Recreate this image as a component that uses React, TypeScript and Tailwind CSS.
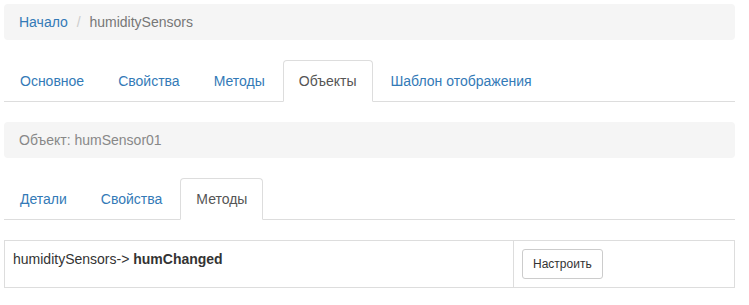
const font = { fontFamily: '"Liberation Sans", Arial, sans-serif' }

type Tab = { label: string; active?: boolean }

function Tabs({ items }: { items: Tab[] }) {
  return (
    <ul className="flex border-b border-[#ddd] mb-5">
      {items.map((t) => (
        <li key={t.label} className="-mb-px mr-[2px]">
          {t.active ? (
            <span className="block px-[15px] py-[10px] leading-5 border border-[#ddd] border-b-white rounded-t bg-white text-[#555]">
              {t.label}
            </span>
          ) : (
            <a
              href="#"
              className="block px-[15px] py-[10px] leading-5 border border-transparent rounded-t text-[#337ab7]"
            >
              {t.label}
            </a>
          )}
        </li>
      ))}
    </ul>
  )
}

export default function App() {
  return (
    <div className="bg-white min-h-[305px] pt-1 pl-1 text-sm text-[#333]" style={font}>
      <div className="w-[731px]">
        <div className="bg-[#f5f5f5] rounded px-[15px] py-2 leading-5 mb-5">
          <a href="#" className="text-[#337ab7]">
            Начало
          </a>
          <span className="text-[#ccc] px-[5px]"> / </span>
          <span className="text-[#777]">humiditySensors</span>
        </div>

        <Tabs
          items={[
            { label: 'Основное' },
            { label: 'Свойства' },
            { label: 'Методы' },
            { label: 'Объекты', active: true },
            { label: 'Шаблон отображения' },
          ]}
        />

        <div className="bg-[#f5f5f5] rounded px-[15px] py-2 leading-5 mb-5 text-[#888]">
          Объект: humSensor01
        </div>

        <Tabs
          items={[
            { label: 'Детали' },
            { label: 'Свойства' },
            { label: 'Методы', active: true },
          ]}
        />

        <table className="w-full border-collapse border border-[#ddd]">
          <tbody>
            <tr>
              <td className="border border-[#ddd] p-2 align-top leading-5 w-[509px]">
                humiditySensors-&gt; <b>humChanged</b>
              </td>
              <td className="border border-[#ddd] p-2 align-top">
                <button className="bg-white border border-[#ccc] rounded-[3px] px-[10px] py-[5px] text-xs leading-[18px] text-[#333]">
                  Настроить
                </button>
              </td>
            </tr>
          </tbody>
        </table>
      </div>
    </div>
  )
}
